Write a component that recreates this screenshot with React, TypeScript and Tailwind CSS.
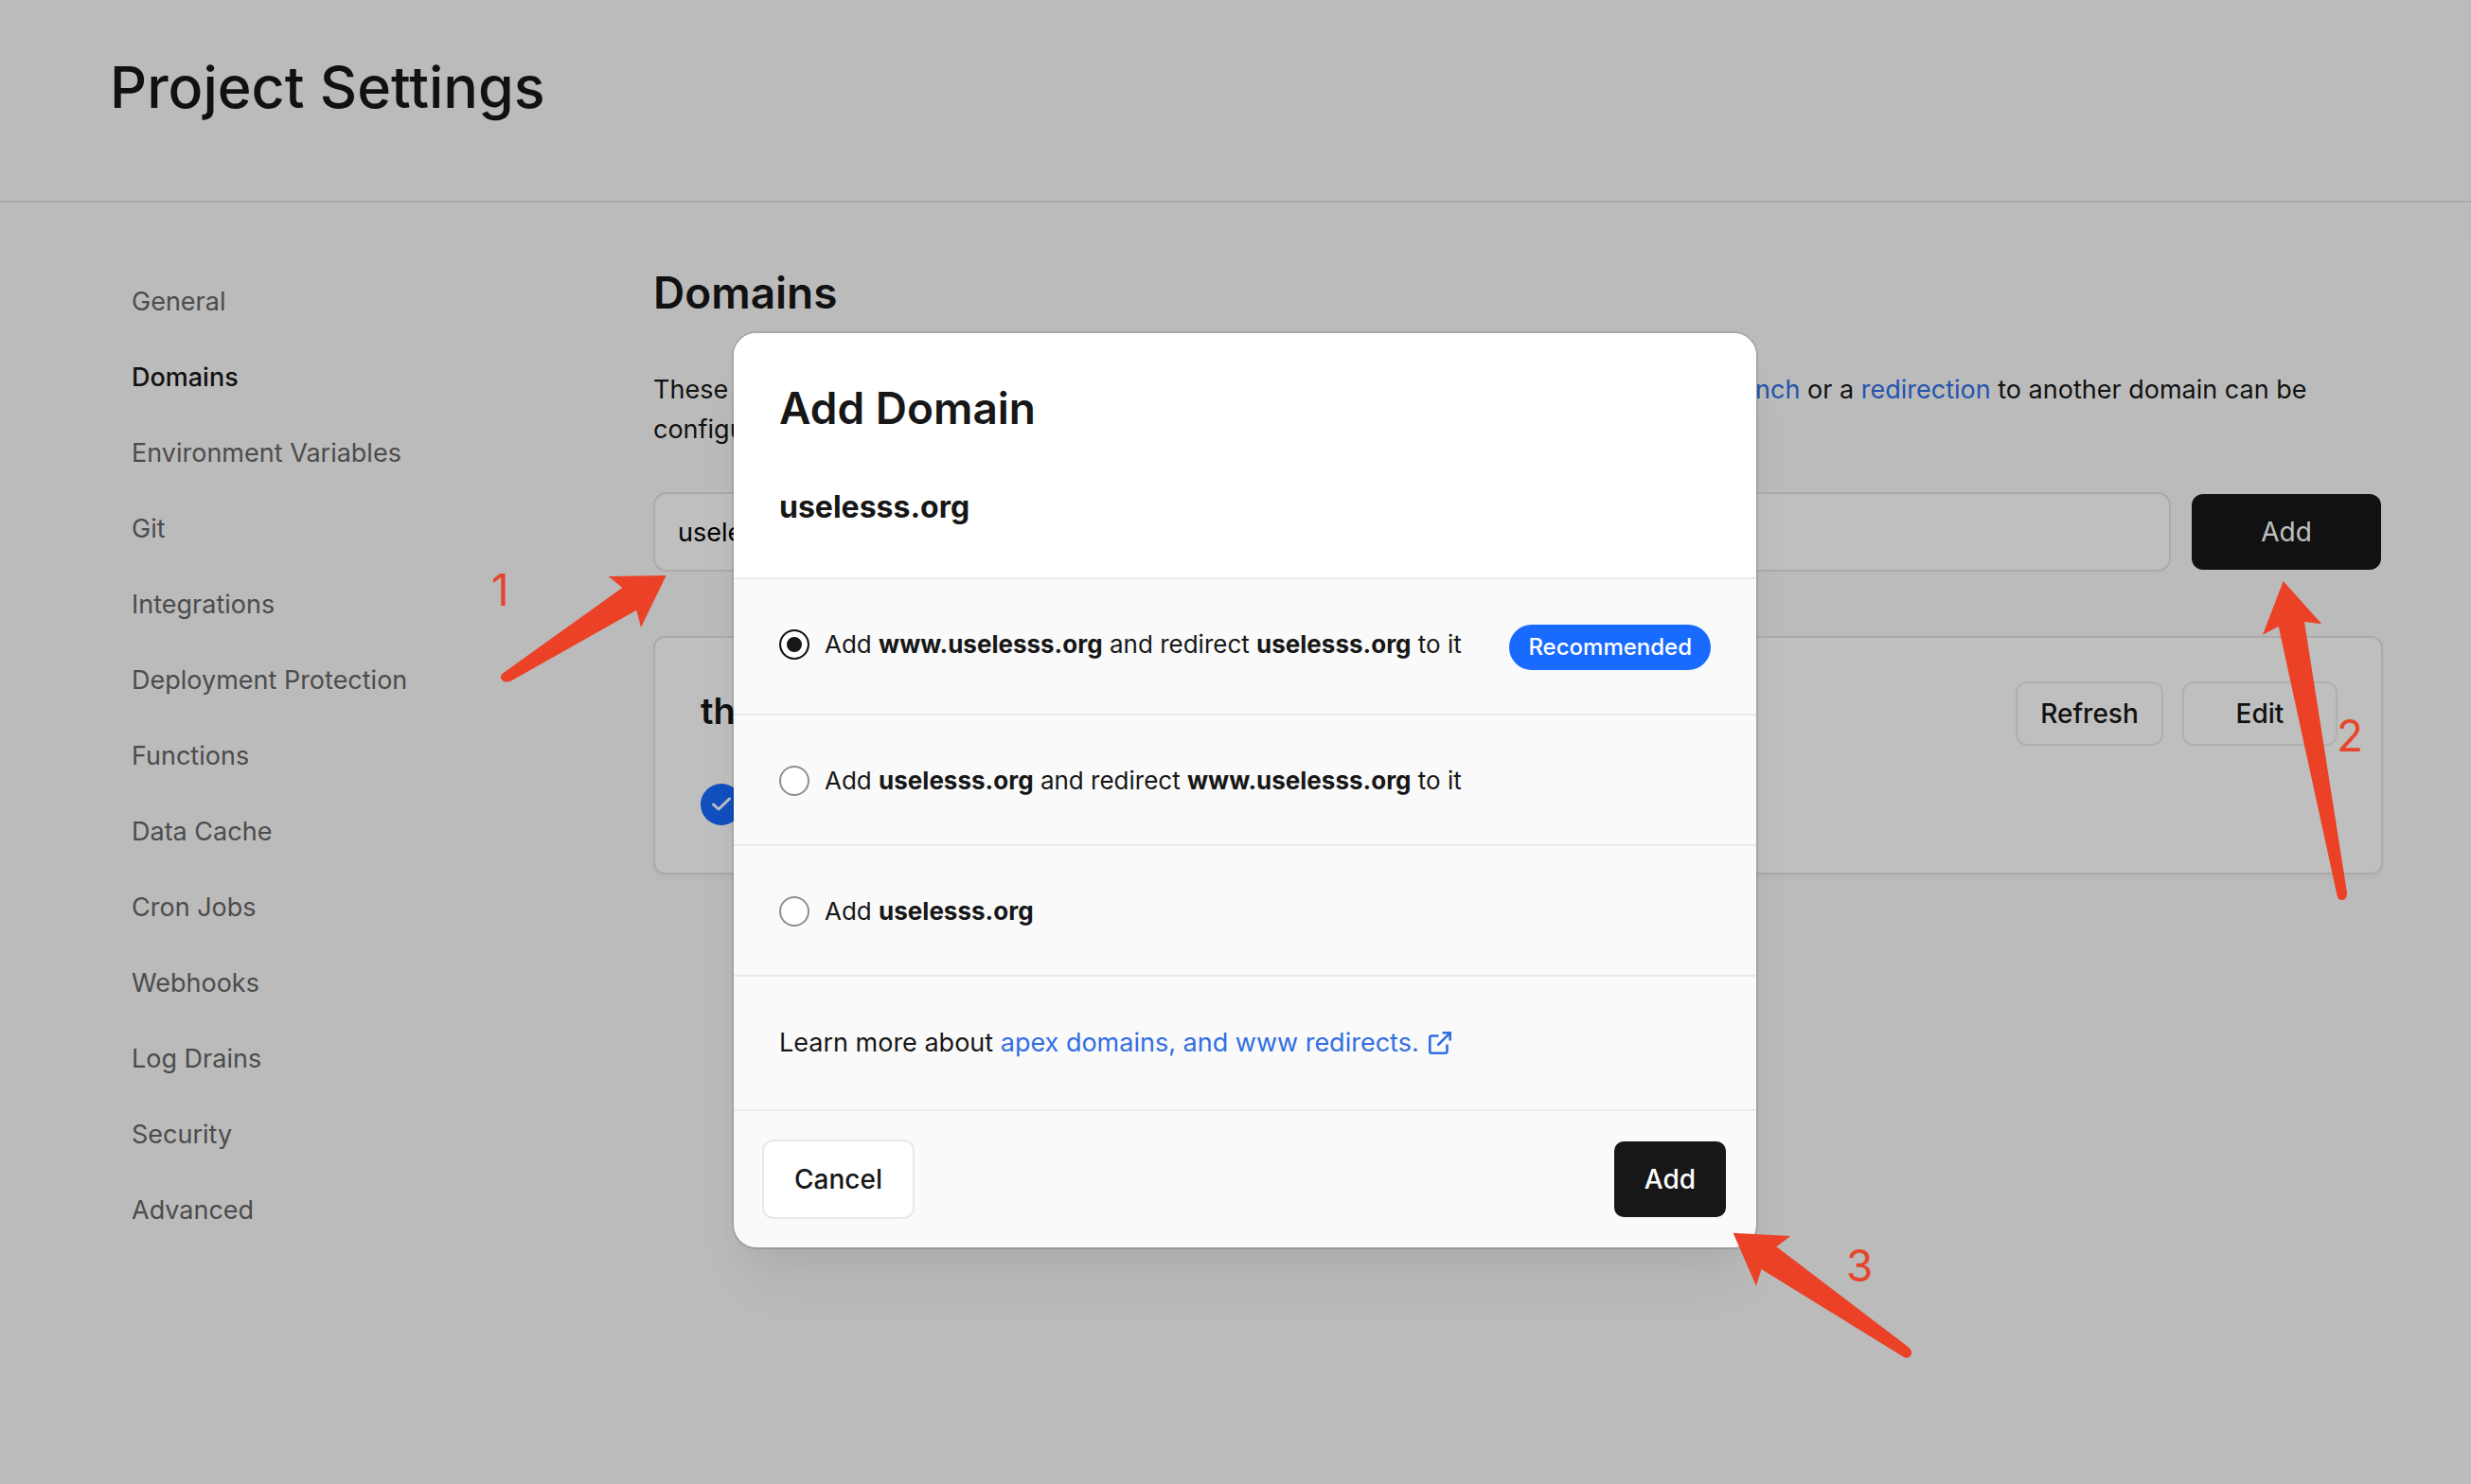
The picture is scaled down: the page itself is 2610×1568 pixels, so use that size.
import React, { useState } from "react";

const sections = [
  "General",
  "Domains",
  "Environment Variables",
  "Git",
  "Integrations",
  "Deployment Protection",
  "Functions",
  "Data Cache",
  "Cron Jobs",
  "Webhooks",
  "Log Drains",
  "Security",
  "Advanced",
];

const options = [
  {
    id: "www",
    recommended: true,
    label: (
      <>
        Add <b>www.uselesss.org</b> and redirect <b>uselesss.org</b> to it
      </>
    ),
  },
  {
    id: "apex",
    recommended: false,
    label: (
      <>
        Add <b>uselesss.org</b> and redirect <b>www.uselesss.org</b> to it
      </>
    ),
  },
  {
    id: "single",
    recommended: false,
    label: (
      <>
        Add <b>uselesss.org</b>
      </>
    ),
  },
];

function Header() {
  return (
    <header className="border-b-2 border-[#e3e3e3] px-[116px] pt-14 pb-[84px]">
      <h1 className="text-[61px] leading-[72px] font-medium">Project Settings</h1>
    </header>
  );
}

function SideNav() {
  return (
    <nav aria-label="Project settings" className="w-[526px] shrink-0">
      <ul>
        {sections.map((name) => (
          <li key={name}>
            <a
              href="#"
              aria-current={name === "Domains" ? "page" : undefined}
              className="flex h-20 items-center px-[23px] text-[27px] text-[#666] aria-[current=page]:font-medium aria-[current=page]:text-[#171717]"
            >
              {name}
            </a>
          </li>
        ))}
      </ul>
    </nav>
  );
}

function DomainCard() {
  return (
    <article className="mt-[68px] rounded-xl border-2 border-[#e3e3e3] bg-white pt-[46px] pr-[46px] pb-[50px] pl-12 shadow-[0_4px_4px_rgba(0,0,0,0.04)]">
      <div className="flex items-start justify-between">
        <h3 className="text-[38px] leading-[62px] font-semibold">the-app.vercel.app</h3>
        <div className="flex gap-5 text-[28px] font-medium">
          <button type="button" className="h-[68px] w-[156px] rounded-xl border-2 border-[#ebebeb]">
            Refresh
          </button>
          <button type="button" className="h-[68px] w-[164px] rounded-xl border-2 border-[#ebebeb]">
            Edit
          </button>
        </div>
      </div>
      <p className="mt-10 flex items-center gap-4 text-[27px]">
        <svg viewBox="0 0 44 44" className="size-11" fill="none" aria-hidden="true">
          <circle cx="22" cy="22" r="22" fill="#196aff" />
          <path d="M13.5 22L19 27L30.5 16" stroke="#fff" strokeWidth="3" strokeLinecap="round" strokeLinejoin="round" />
        </svg>
        Valid Configuration
      </p>
    </article>
  );
}

function Domains() {
  const [domain, setDomain] = useState("uselesss.org");
  return (
    <main className="min-w-0 flex-1">
      <h2 className="text-[46px] leading-[60px] font-semibold">Domains</h2>
      <p className="mt-[52px] text-[27px] leading-[42px]">
        These domains are assigned to your Production Deployments. Optionally, a different{" "}
        <a href="#" className="text-[#3070e8]">Git branch</a> or a{" "}
        <a href="#" className="text-[#3070e8]">redirection</a> to another domain can be configured for each one.
      </p>
      <form className="mt-[45px] flex items-center gap-[22px] pr-0.5" onSubmit={(e) => e.preventDefault()}>
        <input
          type="text"
          aria-label="Domain name"
          value={domain}
          onChange={(e) => setDomain(e.target.value)}
          className="h-[84px] min-w-0 flex-1 rounded-[14px] border-2 border-[#e3e3e3] bg-white px-6 text-[27px] text-black"
        />
        <button type="submit" className="h-20 w-[200px] rounded-xl bg-[#171717] text-[28px] text-white">
          Add
        </button>
      </form>
      <DomainCard />
    </main>
  );
}

function ExternalIcon() {
  return (
    <svg viewBox="0 0 24 24" className="size-6" fill="none" stroke="currentColor" strokeWidth="2.6" aria-hidden="true">
      <path d="M14.5 1.3H22.7V9.5M22.4 1.6L9.5 14.5" />
      <path d="M10.5 4.5H3.3a2 2 0 0 0-2 2V20.7a2 2 0 0 0 2 2H17.5a2 2 0 0 0 2-2V13.5" />
    </svg>
  );
}

function AddDomainDialog() {
  const [choice, setChoice] = useState("www");
  return (
    <div className="absolute inset-0 flex items-start justify-center bg-black/25 pt-[352px] pl-5">
      <div
        role="dialog"
        aria-modal="true"
        aria-labelledby="dialog-title"
        className="w-full max-w-[1080px] divide-y-2 divide-[#eaeaea] overflow-hidden rounded-3xl bg-[#fafafa] shadow-[0_0_0_2px_rgba(0,0,0,0.1),0_2px_2px_rgba(0,0,0,0.02),0_16px_32px_-8px_rgba(0,0,0,0.04),0_48px_64px_-16px_rgba(0,0,0,0.06)]"
      >
        <div className="bg-white px-12 pt-12 pb-[54px]">
          <h2 id="dialog-title" className="text-[46px] leading-[62px] font-semibold">
            Add Domain
          </h2>
          <p className="mt-[54px] text-[32px] leading-10 font-bold">uselesss.org</p>
        </div>
        {options.map((option) => (
          <div key={option.id} className="flex items-start justify-between px-12 pt-12 pb-[46px]">
            <label className="flex items-center gap-4 text-[26px] leading-[42px]">
              <input
                type="radio"
                name="redirect"
                checked={choice === option.id}
                onChange={() => setChoice(option.id)}
                className="size-8 shrink-0 appearance-none rounded-full border-2 border-[#8f8f8f] bg-white checked:border-[#171717] checked:bg-[#171717] checked:shadow-[inset_0_0_0_6px_#fff]"
              />
              <span>{option.label}</span>
            </label>
            {option.recommended && (
              <span className="flex h-12 items-center rounded-full bg-[#196aff] px-5 text-[24px] font-medium text-white">
                Recommended
              </span>
            )}
          </div>
        ))}
        <p className="px-12 pt-[49px] pb-[49px] text-[27px] leading-[42px]">
          Learn more about{" "}
          <a href="#" className="inline-flex items-center gap-2.5 text-[#316ee3]">
            apex domains, and www redirects.
            <ExternalIcon />
          </a>
        </p>
        <div className="flex justify-between p-8 text-[28px] font-medium">
          <button type="button" className="h-20 rounded-[10px] bg-white px-8 shadow-[0_0_0_2px_#e8e8e8]">
            Cancel
          </button>
          <button type="button" className="h-20 rounded-[10px] bg-[#171717] px-8 text-white">
            Add
          </button>
        </div>
      </div>
    </div>
  );
}

function Annotations() {
  return (
    <div className="pointer-events-none text-[46px] leading-none text-[#e5462c]">
      <span className="absolute top-[600px] left-[519px]">1</span>
      <svg viewBox="528 606 178 118" className="absolute top-[606px] left-[528px] h-[118px] w-[178px]" aria-hidden="true">
        <path
          fill="#eb4126"
          d="M703.7 608L642.7 609L657.3 621L531 711.5Q528 714 529.5 717.5Q532 722 539.3 719.7L672.3 644.7L677 663Z"
        />
      </svg>
      <span className="absolute top-[754px] left-[2468px]">2</span>
      <svg viewBox="2388 612 94 342" className="absolute top-[612px] left-[2388px] h-[342px] w-[94px]" aria-hidden="true">
        <path
          fill="#eb4126"
          d="M2411.7 614L2452.3 659.3L2434 657L2479 943Q2479.4 950.6 2474 951Q2469.6 951.4 2468.5 946L2406.7 661.7L2390 670.7Z"
        />
      </svg>
      <span className="absolute top-[1314px] left-[1950px]">3</span>
      <svg viewBox="1828 1300 194 138" className="absolute top-[1300px] left-[1828px] h-[138px] w-[194px]" aria-hidden="true">
        <path
          fill="#eb4126"
          d="M1830.6 1302.7L1891.2 1306L1876.4 1317.3L2016 1423.5Q2020.6 1428 2018.5 1432Q2015 1437 2009.4 1433L1860.4 1341L1855 1358.7Z"
        />
      </svg>
    </div>
  );
}

export default function App() {
  return (
    <div className="relative min-h-screen bg-[#fafafa] font-['Inter',sans-serif] text-[#171717]">
      <Header />
      <div className="flex gap-12 pt-[65px] pr-[93px] pl-[116px]">
        <SideNav />
        <Domains />
      </div>
      <AddDomainDialog />
      <Annotations />
    </div>
  );
}
